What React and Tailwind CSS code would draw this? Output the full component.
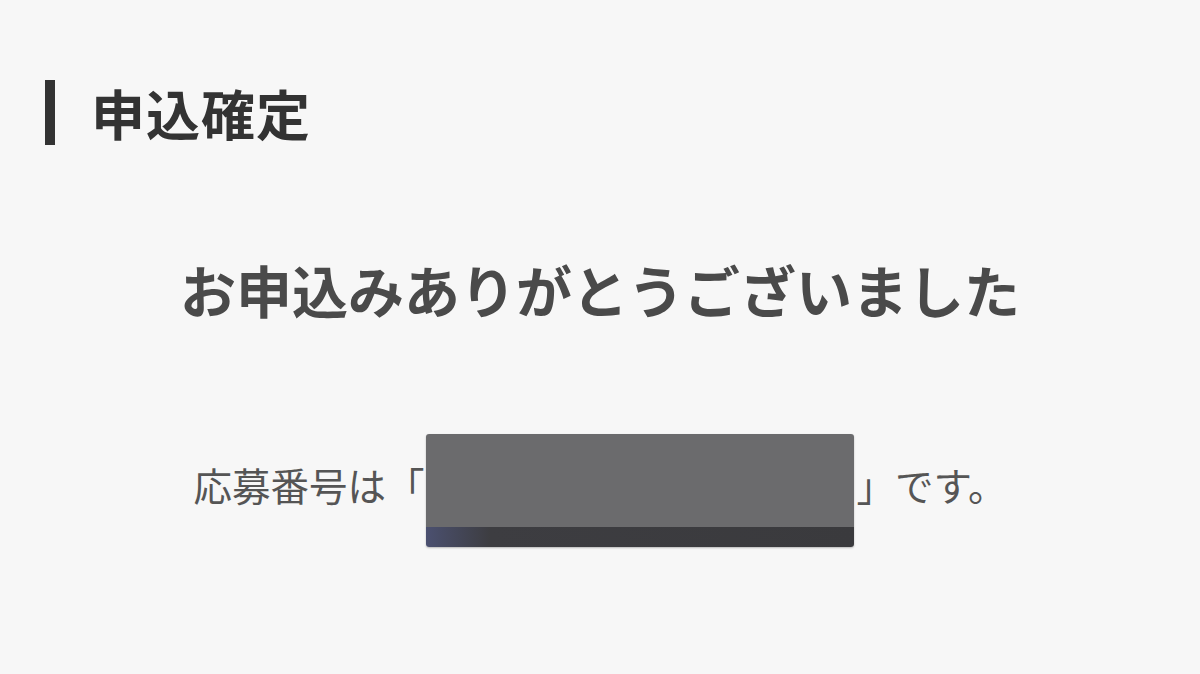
import React from 'react';

const font = { fontFamily: '"Noto Sans CJK JP", "Noto Sans", sans-serif' };

const Redacted = () => (
    <span className="inline-flex flex-col w-[428px] h-[113px] -my-[40px] mx-[2px] align-middle rounded-[3px] overflow-hidden shadow-[0_1px_2px_rgba(0,0,0,0.25)]">
        <span className="block flex-1 bg-[#6b6b6d]" />
        <span className="block h-[20px] bg-gradient-to-r from-[#4b5070] via-[#3d3d41] via-[15%] to-[#3a3a3d]" />
    </span>
);

const App = () => {
    return (
        <div className="w-[1200px] h-[674px] bg-[#f7f7f7] text-[#333]" style={font}>
            <div className="pt-[80px] pl-[45px] flex items-center gap-[36px]">
                <div className="w-[10px] h-[65px] bg-[#333]" />
                <h1 className="text-[54px] font-bold leading-none tracking-[1px] text-[#333]">申込確定</h1>
            </div>

            <h2 className="mt-[116px] text-center text-[56px] font-bold leading-none text-[#4a4a4a]">
                お申込みありがとうございました
            </h2>

            <p className="mt-[148px] text-center text-[38.5px] leading-none text-[#555] whitespace-nowrap">
                応募番号は「<Redacted />」です。
            </p>
        </div>
    );
};

export default App;
